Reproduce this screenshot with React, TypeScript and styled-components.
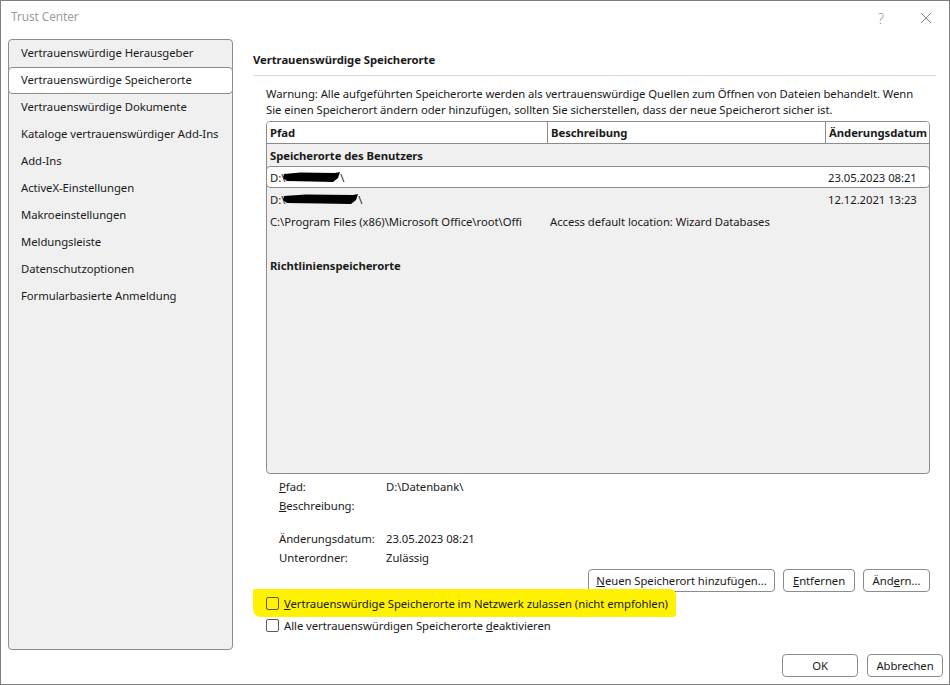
import styled, { createGlobalStyle } from "styled-components";

const GlobalStyle = createGlobalStyle`
  html, body {
    margin: 0;
    padding: 0;
    background: #ffffff;
  }
  body {
    font-family: "Noto Sans", "Open Sans", sans-serif;
    font-size: 11.3px;
    letter-spacing: -0.05px;
    color: #1a1a1a;
  }
`;

const sideItems = [
  "Vertrauenswürdige Herausgeber",
  "Vertrauenswürdige Speicherorte",
  "Vertrauenswürdige Dokumente",
  "Kataloge vertrauenswürdiger Add-Ins",
  "Add-Ins",
  "ActiveX-Einstellungen",
  "Makroeinstellungen",
  "Meldungsleiste",
  "Datenschutzoptionen",
  "Formularbasierte Anmeldung",
];

function Redacted({ width }: { width: number }) {
  return (
    <Blob width={width} height={12} viewBox={`0 0 ${width} 12`}>
      <path
        d={`M1 3 L${width * 0.3} 1.5 L${width - 6} 2 L${width - 1} 1 L${width - 3} 7 L${width - 8} 11 L${width * 0.5} 10.5 L4 10 L0 7 Z`}
        fill="#000"
      />
    </Blob>
  );
}

function App() {
  return (
    <>
      <GlobalStyle />
      <Window>
        <TitleBar>
          <Title>Trust Center</Title>
          <TitleActions>
            <HelpGlyph>?</HelpGlyph>
            <svg width="12" height="12" viewBox="0 0 12 12">
              <path d="M1 1 L11 11 M11 1 L1 11" stroke="#8a8a8a" strokeWidth="1" />
            </svg>
          </TitleActions>
        </TitleBar>

        <Body>
          <Sidebar>
            {sideItems.map((item, i) => (
              <SideItem key={item} $active={i === 1}>
                {item}
              </SideItem>
            ))}
          </Sidebar>

          <Main>
            <Heading>Vertrauenswürdige Speicherorte</Heading>
            <Separator />
            <Content>
              <Warning>
                Warnung: Alle aufgeführten Speicherorte werden als vertrauenswürdige Quellen zum Öffnen von Dateien behandelt. Wenn
                <br />
                Sie einen Speicherort ändern oder hinzufügen, sollten Sie sicherstellen, dass der neue Speicherort sicher ist.
              </Warning>

              <Table>
                <HeaderRow>
                  <HeadCell>Pfad</HeadCell>
                  <HeadCell $divider>Beschreibung</HeadCell>
                  <HeadCell $divider>Änderungsdatum</HeadCell>
                </HeaderRow>
                <GroupRow>Speicherorte des Benutzers</GroupRow>
                <Row $selected>
                  <Cell>
                    D:\<Redacted width={58} />\
                  </Cell>
                  <Cell />
                  <Cell>23.05.2023 08:21</Cell>
                </Row>
                <Row>
                  <Cell>
                    D:\<Redacted width={76} />\
                  </Cell>
                  <Cell />
                  <Cell>12.12.2021 13:23</Cell>
                </Row>
                <Row>
                  <Cell>C:\Program Files (x86)\Microsoft Office\root\Offi</Cell>
                  <Cell>Access default location: Wizard Databases</Cell>
                  <Cell />
                </Row>
                <Row />
                <GroupRow>Richtlinienspeicherorte</GroupRow>
              </Table>

              <Details>
                <DetailLabel>
                  <u>P</u>fad:
                </DetailLabel>
                <DetailValue>D:\Datenbank\</DetailValue>
                <DetailLabel>
                  <u>B</u>eschreibung:
                </DetailLabel>
                <DetailValue />
                <DetailGap />
                <DetailLabel>Änderungsdatum:</DetailLabel>
                <DetailValue>23.05.2023 08:21</DetailValue>
                <DetailLabel>Unterordner:</DetailLabel>
                <DetailValue>Zulässig</DetailValue>
              </Details>

              <ButtonRow>
                <Button $width={187}>
                  <u>N</u>euen Speicherort hinzufügen...
                </Button>
                <Button $width={72}>
                  <u>E</u>ntfernen
                </Button>
                <Button $width={67}>
                  Änd<u>e</u>rn...
                </Button>
              </ButtonRow>

              <CheckRow $highlight>
                <Checkbox />
                <span>
                  <u>V</u>ertrauenswürdige Speicherorte im Netzwerk zulassen (nicht empfohlen)
                </span>
              </CheckRow>
              <CheckRow>
                <Checkbox />
                <span>
                  Alle vertrauenswürdigen Speicherorte <u>d</u>eaktivieren
                </span>
              </CheckRow>
            </Content>
          </Main>
        </Body>

        <Footer>
          <Button $width={76}>OK</Button>
          <Button $width={76}>Abbrechen</Button>
        </Footer>
      </Window>
    </>
  );
}

const Window = styled.div`
  width: 950px;
  height: 685px;
  box-sizing: border-box;
  border: 1px solid #7f7f7f;
  background: #ffffff;
  display: flex;
  flex-direction: column;
  overflow: hidden;
`;

const TitleBar = styled.div`
  height: 38px;
  flex-shrink: 0;
  display: flex;
  align-items: flex-start;
  justify-content: space-between;
  padding: 7px 17px 0 10px;
  box-sizing: border-box;
`;

const Title = styled.div`
  color: #9c9c9c;
  font-size: 11.8px;
  line-height: 16px;
`;

const TitleActions = styled.div`
  display: flex;
  align-items: center;
  gap: 36px;
  height: 16px;
  padding-top: 2px;
`;

const HelpGlyph = styled.span`
  color: #9a9a9a;
  font-size: 14px;
  font-weight: 300;
`;

const Body = styled.div`
  flex: 1;
  display: flex;
  min-height: 0;
  padding-left: 7px;
`;

const Sidebar = styled.div`
  width: 225px;
  flex-shrink: 0;
  box-sizing: border-box;
  background: #f0f0f0;
  border: 1px solid #8c8c8c;
  border-radius: 4px;
  display: flex;
  flex-direction: column;
`;

const SideItem = styled.div<{ $active?: boolean }>`
  height: 27px;
  box-sizing: border-box;
  display: flex;
  align-items: center;
  padding: 0 0 2px 12px;
  margin: 0 -1px;
  white-space: nowrap;
  background: ${(p) => (p.$active ? "#ffffff" : "transparent")};
  border: 1px solid ${(p) => (p.$active ? "#8c8c8c" : "transparent")};
  border-radius: 4px;
`;

const Main = styled.div`
  flex: 1;
  display: flex;
  flex-direction: column;
  padding: 0 13px 0 20px;
  min-width: 0;
`;

const Heading = styled.div`
  font-weight: 700;
  line-height: 16px;
  padding-top: 13px;
`;

const Separator = styled.div`
  height: 1px;
  background: #d6d6d6;
  margin-top: 7px;
`;

const Content = styled.div`
  display: flex;
  flex-direction: column;
  padding: 0 6px 0 13px;
`;

const Warning = styled.div`
  line-height: 16px;
  margin-top: 10px;
  white-space: nowrap;
`;

const Table = styled.div`
  margin-top: 3px;
  height: 353px;
  box-sizing: border-box;
  border: 1px solid #8c8c8c;
  border-radius: 4px;
  background: #f0f0f0;
  overflow: hidden;
  display: flex;
  flex-direction: column;
`;

const columns = "280px 278px 1fr";

const HeaderRow = styled.div`
  display: grid;
  grid-template-columns: ${columns};
  height: 22px;
  flex-shrink: 0;
  background: #ffffff;
  border-bottom: 1px solid #8c8c8c;
  box-sizing: border-box;
`;

const HeadCell = styled.div<{ $divider?: boolean }>`
  font-weight: 700;
  display: flex;
  align-items: center;
  padding-left: 3px;
  white-space: nowrap;
  border-left: ${(p) => (p.$divider ? "1px solid #8c8c8c" : "none")};
`;

const GroupRow = styled.div`
  height: 22px;
  flex-shrink: 0;
  display: flex;
  align-items: center;
  padding-left: 3px;
  font-weight: 700;
`;

const Row = styled.div<{ $selected?: boolean }>`
  display: grid;
  grid-template-columns: ${columns};
  height: 22px;
  flex-shrink: 0;
  box-sizing: border-box;
  background: ${(p) => (p.$selected ? "#ffffff" : "transparent")};
  border: 1px solid ${(p) => (p.$selected ? "#8c8c8c" : "transparent")};
  border-radius: 4px;
  margin: 0 -1px;
`;

const Cell = styled.div`
  display: flex;
  align-items: center;
  padding-left: 3px;
  white-space: nowrap;
  overflow: hidden;
`;

const Blob = styled.svg`
  flex-shrink: 0;
  margin: 0 -1px 0 -2px;
`;

const Details = styled.div`
  display: grid;
  grid-template-columns: 107px 1fr;
  align-items: center;
  margin-top: 3px;
  padding-left: 13px;
`;

const DetailLabel = styled.div`
  white-space: nowrap;
  line-height: 19px;
  height: 19px;
`;

const DetailValue = styled.div`
  white-space: nowrap;
  line-height: 19px;
  height: 19px;
`;

const DetailGap = styled.div`
  grid-column: 1 / -1;
  height: 14px;
`;

const ButtonRow = styled.div`
  display: flex;
  justify-content: flex-end;
  gap: 8px;
  margin-top: 2px;
`;

const Button = styled.button<{ $width: number }>`
  width: ${(p) => p.$width}px;
  height: 23px;
  padding: 0;
  box-sizing: border-box;
  border: 1px solid #8c8c8c;
  border-radius: 4px;
  background: #ffffff;
  font-family: inherit;
  font-size: 11.3px;
  letter-spacing: -0.05px;
  color: #1a1a1a;
  white-space: nowrap;
`;

const CheckRow = styled.div<{ $highlight?: boolean }>`
  position: relative;
  isolation: isolate;
  height: 22px;
  display: flex;
  align-items: center;
  gap: 5px;
  align-self: flex-start;
  white-space: nowrap;

  &::before {
    content: "";
    display: ${(p) => (p.$highlight ? "block" : "none")};
    position: absolute;
    z-index: -1;
    top: -3px;
    bottom: -3px;
    left: -13px;
    right: -8px;
    background: #fff200;
    border-radius: 2px 6px 3px 8px;
  }
`;

const Checkbox = styled.span`
  width: 13px;
  height: 13px;
  box-sizing: border-box;
  border: 1px solid #5a5a5a;
  border-radius: 2px;
  background: transparent;
  flex-shrink: 0;
`;

const Footer = styled.div`
  height: 34px;
  flex-shrink: 0;
  display: flex;
  justify-content: flex-end;
  align-items: flex-start;
  gap: 9px;
  padding: 4px 6px 0 0;
  box-sizing: border-box;
`;

export default App;
